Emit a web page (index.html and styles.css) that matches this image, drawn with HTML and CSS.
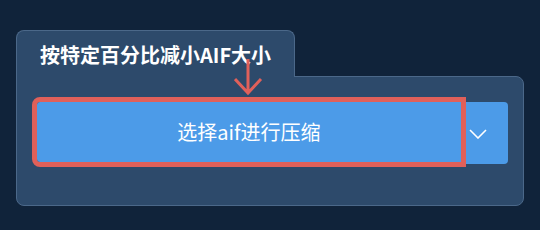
FILE: index.html
```html
<!DOCTYPE html>
<html lang="zh">
<head>
<meta charset="utf-8">
<link rel="stylesheet" href="styles.css">
</head>
<body>
<div class="page">
  <div class="tab">按特定百分比减小AIF大小</div>
  <div class="panel">
    <div class="btn-group">
      <button class="btn-main">选择aif进行压缩</button>
      <button class="btn-drop">
        <svg width="18" height="10" viewBox="0 0 18 10"><path d="M1 1 L9 9 L17 1" fill="none" stroke="#ffffff" stroke-width="1.6"/></svg>
      </button>
    </div>
  </div>
  <svg class="arrow" width="30" height="40" viewBox="0 0 30 40"><path d="M14 2 L14 36 M1 22 L14 36 L27 22" fill="none" stroke="#e0605a" stroke-width="3"/></svg>
</div>
</body>
</html>
```
FILE: styles.css
```css
html, body {
  margin: 0;
  padding: 0;
  background: #10233a;
  width: 540px;
  height: 230px;
  overflow: hidden;
}
.page {
  position: relative;
  padding: 30px 0 0 16px;
  font-family: "Noto Sans CJK SC", "Noto Sans", sans-serif;
}
.tab {
  position: relative;
  z-index: 1;
  box-sizing: border-box;
  width: 279px;
  height: 47px;
  margin-bottom: -1px;
  padding: 3px 0 0 23px;
  line-height: 42px;
  background: #2d4a6b;
  border: 1px solid #4b6889;
  border-bottom: none;
  border-radius: 8px 8px 0 0;
  color: #ffffff;
  font-size: 20px;
  font-weight: 700;
  white-space: nowrap;
}
.panel {
  box-sizing: border-box;
  width: 508px;
  height: 130px;
  padding: 25px 0 0 20px;
  background: #2d4a6b;
  border: 1px solid #4b6889;
  border-radius: 0 8px 8px 8px;
}
.btn-group {
  display: flex;
  align-items: flex-start;
}
.btn-main {
  width: 424px;
  height: 60px;
  border: none;
  margin: 0;
  padding: 0 0 1px 0;
  background: #4c9be8;
  color: #ffffff;
  font-family: "Noto Sans CJK SC", "Noto Sans", sans-serif;
  font-size: 20px;
  border-radius: 3px 0 0 3px;
  outline: 5px solid #e0605a;
  position: relative;
  z-index: 1;
}
.btn-drop {
  box-sizing: border-box;
  width: 42px;
  height: 62px;
  margin: 0 0 0 5px;
  padding: 0 0 0 3px;
  border: none;
  background: #4c9be8;
  border-radius: 0 4px 4px 0;
  display: flex;
  align-items: center;
  justify-content: flex-start;
}
.btn-drop svg {
  display: block;
  margin-top: 2px;
}
.arrow {
  position: absolute;
  left: 234px;
  top: 57px;
  z-index: 2;
}
```
